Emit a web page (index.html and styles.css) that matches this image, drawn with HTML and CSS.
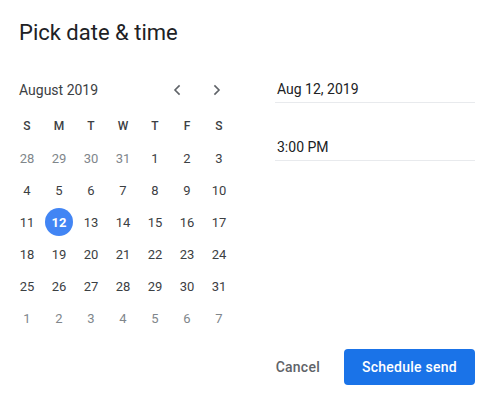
FILE: index.html
```html
<!DOCTYPE html>
<html>
<head>
<meta charset="utf-8">
<link rel="stylesheet" href="styles.css">
</head>
<body>
<div class="dialog">
  <h1 class="title">Pick date &amp; time</h1>
  <div class="content">
    <div class="calendar">
      <div class="cal-head">
        <div class="month">August 2019</div>
        <div class="nav">
          <button class="nav-btn" aria-label="Previous month">
            <svg width="8" height="12" viewBox="0 0 8 12"><path d="M6.6 1.4 2 6l4.6 4.6" fill="none" stroke="#5f6368" stroke-width="1.6"/></svg>
          </button>
          <button class="nav-btn" aria-label="Next month">
            <svg width="8" height="12" viewBox="0 0 8 12"><path d="M1.4 1.4 6 6l-4.6 4.6" fill="none" stroke="#5f6368" stroke-width="1.6"/></svg>
          </button>
        </div>
      </div>
      <div class="grid">
        <div class="dow">S</div><div class="dow">M</div><div class="dow">T</div><div class="dow">W</div><div class="dow">T</div><div class="dow">F</div><div class="dow">S</div>
        <div class="day muted">28</div><div class="day muted">29</div><div class="day muted">30</div><div class="day muted">31</div><div class="day">1</div><div class="day">2</div><div class="day">3</div>
        <div class="day">4</div><div class="day">5</div><div class="day">6</div><div class="day">7</div><div class="day">8</div><div class="day">9</div><div class="day">10</div>
        <div class="day">11</div><div class="day"><span class="selected">12</span></div><div class="day">13</div><div class="day">14</div><div class="day">15</div><div class="day">16</div><div class="day">17</div>
        <div class="day">18</div><div class="day">19</div><div class="day">20</div><div class="day">21</div><div class="day">22</div><div class="day">23</div><div class="day">24</div>
        <div class="day">25</div><div class="day">26</div><div class="day">27</div><div class="day">28</div><div class="day">29</div><div class="day">30</div><div class="day">31</div>
        <div class="day muted">1</div><div class="day muted">2</div><div class="day muted">3</div><div class="day muted">4</div><div class="day muted">5</div><div class="day muted">6</div><div class="day muted">7</div>
      </div>
    </div>
    <div class="fields">
      <div class="field">Aug 12, 2019</div>
      <div class="field">3:00 PM</div>
    </div>
  </div>
  <div class="footer">
    <button class="btn-text">Cancel</button>
    <button class="btn-primary">Schedule send</button>
  </div>
</div>
</body>
</html>
```
FILE: styles.css
```css
* { box-sizing: border-box; }
html, body {
  margin: 0;
  background: #ffffff;
}
body {
  font-family: Roboto, "Liberation Sans", Arial, sans-serif;
  color: #3c4043;
}
.dialog {
  width: 496px;
  height: 404px;
  padding: 19px 21px 0 19px;
}
.title {
  margin: 0;
  font-size: 22px;
  line-height: 28px;
  font-weight: 400;
  color: #202124;
  letter-spacing: 0;
}
.content {
  display: flex;
  margin-top: 27px;
}
.calendar {
  width: 224px;
  margin-left: -8px;
}
.cal-head {
  display: flex;
  align-items: center;
  justify-content: space-between;
  height: 32px;
  margin-bottom: 4px;
}
.month {
  padding-left: 8px;
  font-size: 14px;
  color: #3c4043;
}
.nav {
  display: flex;
  gap: 4px;
}
.nav-btn {
  width: 36px;
  height: 32px;
  border: 0;
  background: transparent;
  padding: 0;
  display: flex;
  align-items: center;
  justify-content: center;
}
.grid {
  display: grid;
  grid-template-columns: repeat(7, 32px);
  grid-auto-rows: 32px;
}
.dow {
  display: flex;
  align-items: center;
  justify-content: center;
  font-size: 12px;
  font-weight: 500;
  color: #3c4043;
}
.day {
  display: flex;
  align-items: center;
  justify-content: center;
  font-size: 13px;
  color: #3c4043;
}
.day.muted { color: #80868b; }
.selected {
  width: 28px;
  height: 28px;
  border-radius: 50%;
  background: #4285f4;
  color: #ffffff;
  font-weight: 700;
  display: flex;
  align-items: center;
  justify-content: center;
}
.fields {
  margin-left: 40px;
  flex: 1;
  display: flex;
  flex-direction: column;
  gap: 29px;
}
.field {
  height: 29px;
  padding-left: 2px;
  padding-top: 1px;
  display: flex;
  align-items: center;
  font-size: 14px;
  color: #202124;
  border-bottom: 1px solid #e8eaed;
}
.footer {
  display: flex;
  justify-content: flex-end;
  gap: 12px;
  margin-top: 15px;
}
.btn-text, .btn-primary {
  height: 36px;
  border: 0;
  border-radius: 4px;
  font-family: Roboto, "Liberation Sans", Arial, sans-serif;
  font-size: 14px;
  font-weight: 500;
  letter-spacing: 0.25px;
}
.btn-text {
  padding: 0 12px;
  background: transparent;
  color: #5f6368;
}
.btn-primary {
  width: 131px;
  padding: 0;
  background: #1a73e8;
  color: #ffffff;
}
```
